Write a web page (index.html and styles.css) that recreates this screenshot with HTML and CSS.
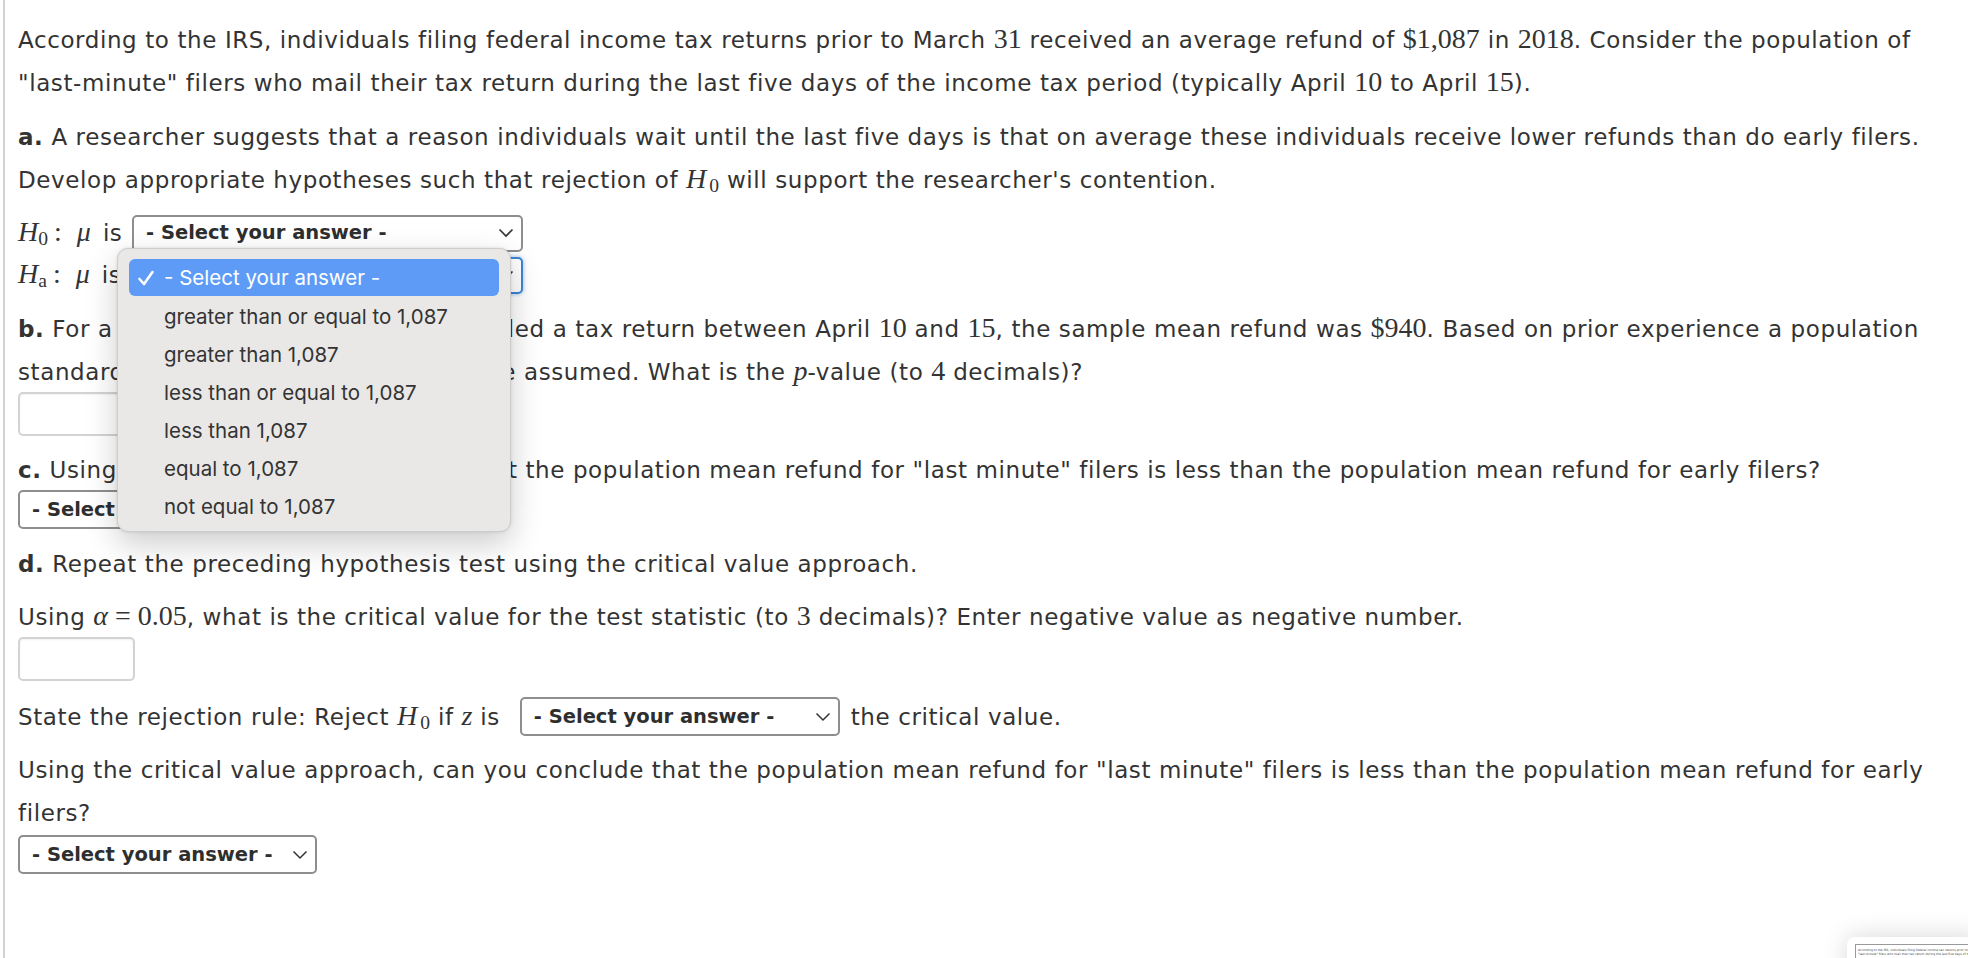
FILE: index.html
```html
<!DOCTYPE html>
<html>
<head>
<meta charset="utf-8">
<title>Hypothesis test</title>
<link rel="stylesheet" href="styles.css">
</head>
<body>
<div class="page">
  <p class="para first">According to the IRS, individuals filing federal income tax returns prior to March <span class="m">31</span> received an average refund of <span class="m">$1,087</span> in <span class="m">2018</span>. Consider the population of<br>"last-minute" filers who mail their tax return during the last five days of the income tax period (typically April <span class="m">10</span> to April <span class="m">15</span>).</p>

  <p class="para gap-p"><b>a.</b> A researcher suggests that a reason individuals wait until the last five days is that on average these individuals receive lower refunds than do early filers.<br>Develop appropriate hypotheses such that rejection of <span class="m"><i class="h">H</i><sub>0</sub></span> will support the researcher's contention.</p>

  <div class="hyp">
    <div class="hyp-row"><span class="hyp-label"><span class="m"><i>H</i><sub>0</sub><span class="colon">:</span><i>μ</i></span><span class="is">is</span></span>
      <div class="select hyp-select"><span>- Select your answer -</span><svg class="chev" width="16" height="10" viewBox="0 0 16 10"><polyline points="1.5,1.5 8,8 14.5,1.5" fill="none" stroke="#333" stroke-width="1.7"/></svg></div>
    </div>
    <div class="hyp-row"><span class="hyp-label"><span class="m"><i>H</i><sub>a</sub><span class="colon">:</span><i>μ</i></span><span class="is">is</span></span>
      <div class="select hyp-select focus"><span>- Select your answer -</span><svg class="chev" width="16" height="10" viewBox="0 0 16 10"><polyline points="1.5,1.5 8,8 14.5,1.5" fill="none" stroke="#333" stroke-width="1.7"/></svg></div>
    </div>
  </div>

  <p class="para gap-b"><b>b.</b> For a sample of <span class="m">400</span> individuals who filed a tax return between April <span class="m">10</span> and <span class="m">15</span>, the sample mean refund was <span class="m">$940</span>. Based on prior experience a population<br>standard <span class="spread">deviation of </span><span class="m"><i>σ</i> = $1,600</span><span class="spread"> may </span>be assumed. What is the <span class="m"><i>p</i></span>-value (to <span class="m">4</span> decimals)?</p>
  <div class="answer"></div>

  <p class="para gap-c"><b>c.</b> Using <span class="m"><i>α</i> = 0.05</span>,<span class="spread-c"> can you conclude </span>that the population mean refund for "last minute" filers is less than the population mean refund for early filers?</p>
  <div class="select block-select"><span>- Select your answer -</span><svg class="chev" width="16" height="10" viewBox="0 0 16 10"><polyline points="1.5,1.5 8,8 14.5,1.5" fill="none" stroke="#333" stroke-width="1.5"/></svg></div>

  <p class="para gap-d"><b>d.</b> Repeat the preceding hypothesis test using the critical value approach.</p>
  <p class="para gap-alpha">Using <span class="m"><i>α</i> = 0.05</span>, what is the critical value for the test statistic (to <span class="m">3</span> decimals)? Enter negative value as negative number.</p>
  <div class="answer"></div>

  <p class="para gap-rule">State the rejection rule: Reject <span class="m"><i class="h">H</i><sub>0</sub></span> if <span class="m"><i>z</i></span> is <span class="select rule-select"><span>- Select your answer -</span><svg class="chev" width="16" height="10" viewBox="0 0 16 10"><polyline points="1.5,1.5 8,8 14.5,1.5" fill="none" stroke="#333" stroke-width="1.5"/></svg></span> the critical value.</p>

  <p class="para gap-last">Using the critical value approach, can you conclude that the population mean refund for "last minute" filers is less than the population mean refund for early<br>filers?</p>
  <div class="select final-select"><span>- Select your answer -</span><svg class="chev" width="16" height="10" viewBox="0 0 16 10"><polyline points="1.5,1.5 8,8 14.5,1.5" fill="none" stroke="#333" stroke-width="1.5"/></svg></div>
</div>

<div class="menu">
  <div class="menu-item sel"><svg class="check" width="18" height="18" viewBox="0 0 18 18"><polyline points="2.5,10 7,15 15.5,3" fill="none" stroke="#fff" stroke-width="2.6" stroke-linecap="round" stroke-linejoin="round"/></svg>- Select your answer -</div>
  <div class="menu-item">greater than or equal to 1,087</div>
  <div class="menu-item">greater than 1,087</div>
  <div class="menu-item">less than or equal to 1,087</div>
  <div class="menu-item">less than 1,087</div>
  <div class="menu-item">equal to 1,087</div>
  <div class="menu-item">not equal to 1,087</div>
</div>

<div class="thumb">
  <div class="thumb-inner">According to the IRS, individuals filing federal income tax returns prior to March 31 received<br>"last-minute" filers who mail their tax return during the last five days of the income</div>
</div>
</body>
</html>
```

FILE: styles.css
```css
* { box-sizing: border-box; }

html, body {
  margin: 0;
  padding: 0;
  background: #ffffff;
}

body {
  width: 1968px;
  height: 958px;
  overflow: hidden;
  position: relative;
  font-family: "DejaVu Sans", Verdana, sans-serif;
  font-size: 23px;
  letter-spacing: 0.6px;
  color: #333333;
}

.page {
  margin-left: 3px;
  border-left: 2px solid #d2d2d2;
  height: 958px;
  padding: 19px 0 0 13px;
}

.para {
  margin: 0;
  line-height: 43px;
  white-space: nowrap;
}

.para b { font-weight: bold; }

.spread { letter-spacing: 1.35px; }
.spread-c { letter-spacing: 1.43px; }

.m {
  font-family: "Liberation Serif", "Times New Roman", serif;
  font-size: 28px;
  letter-spacing: 0;
  line-height: 0;
}

.m i { font-style: italic; }

.m i.h { padding-right: 3px; }

.m sub {
  font-size: 0.7em;
  vertical-align: -0.22em;
  line-height: 0;
  font-style: normal;
}

.colon { margin: 0 15px 0 6px; }

.gap-p { margin-top: 11px; }
.hyp { margin-top: 10px; }
.gap-b { margin-top: 12px; }
.gap-c { margin-top: 13px; }
.gap-d { margin-top: 14px; }
.gap-alpha { margin-top: 10px; }
.gap-rule { margin-top: 15px; }
.gap-last { margin-top: 10px; }

.hyp-row {
  height: 42px;
  display: flex;
  align-items: center;
  white-space: nowrap;
}

.hyp-label {
  width: 114px;
  flex: none;
  white-space: nowrap;
}

.is { margin-left: 12px; }

.select {
  display: flex;
  align-items: center;
  justify-content: space-between;
  height: 39px;
  border: 2px solid #8e8e8e;
  border-radius: 5px;
  background: #ffffff;
  padding: 0 7px 0 12px;
  font-family: "DejaVu Sans", Verdana, sans-serif;
  font-weight: bold;
  font-size: 19.5px;
  letter-spacing: 0;
  color: #2e2e2e;
  line-height: 1;
}

.hyp-select {
  width: 391px;
  height: 37px;
}

.hyp-select.focus {
  border-color: #3b86d6;
  box-shadow: 0 0 4px rgba(59, 134, 214, 0.55);
}

.block-select {
  width: 299px;
  margin-top: -2px;
}

.final-select { width: 299px; }

.rule-select {
  display: inline-flex;
  width: 320px;
  vertical-align: middle;
  margin: 0 3px 0 12px;
  position: relative;
  top: -2px;
}

.chev { flex: none; }

.answer {
  width: 117px;
  height: 44px;
  margin-top: -2px;
  border: 2px solid #d3d3d3;
  border-radius: 5px;
  background: #ffffff;
  box-shadow: inset 0 1px 2px rgba(0, 0, 0, 0.06);
}

.menu {
  position: absolute;
  left: 117px;
  top: 248px;
  width: 394px;
  height: 284px;
  background: #e9e8e7;
  border: 1px solid #cdcdcd;
  border-radius: 11px;
  box-shadow: 0 12px 32px rgba(0, 0, 0, 0.2), 0 0 3px rgba(0, 0, 0, 0.12);
  padding: 10px 11px;
  font-family: Inter, "Liberation Sans", sans-serif;
  font-size: 20.5px;
  letter-spacing: 0;
  color: #333333;
}

.menu-item {
  height: 38px;
  display: flex;
  align-items: center;
  padding-left: 35px;
  position: relative;
  white-space: nowrap;
}

.menu-item.sel {
  height: 37px;
  margin-bottom: 1px;
  background: #5d9bf7;
  color: #ffffff;
  border-radius: 6px;
}

.check {
  position: absolute;
  left: 8px;
  top: 10px;
}

.thumb {
  position: absolute;
  left: 1847px;
  top: 937px;
  width: 140px;
  height: 40px;
  background: #ffffff;
  border-radius: 8px;
  box-shadow: 0 0 26px rgba(0, 0, 0, 0.16);
  padding: 7px 0 0 8px;
}

.thumb-inner {
  border: 1px solid #9a9a9a;
  border-right: none;
  height: 40px;
  padding: 3px 2px;
  font-size: 3px;
  letter-spacing: 0;
  line-height: 4px;
  white-space: nowrap;
  overflow: hidden;
  color: #444444;
}
```
